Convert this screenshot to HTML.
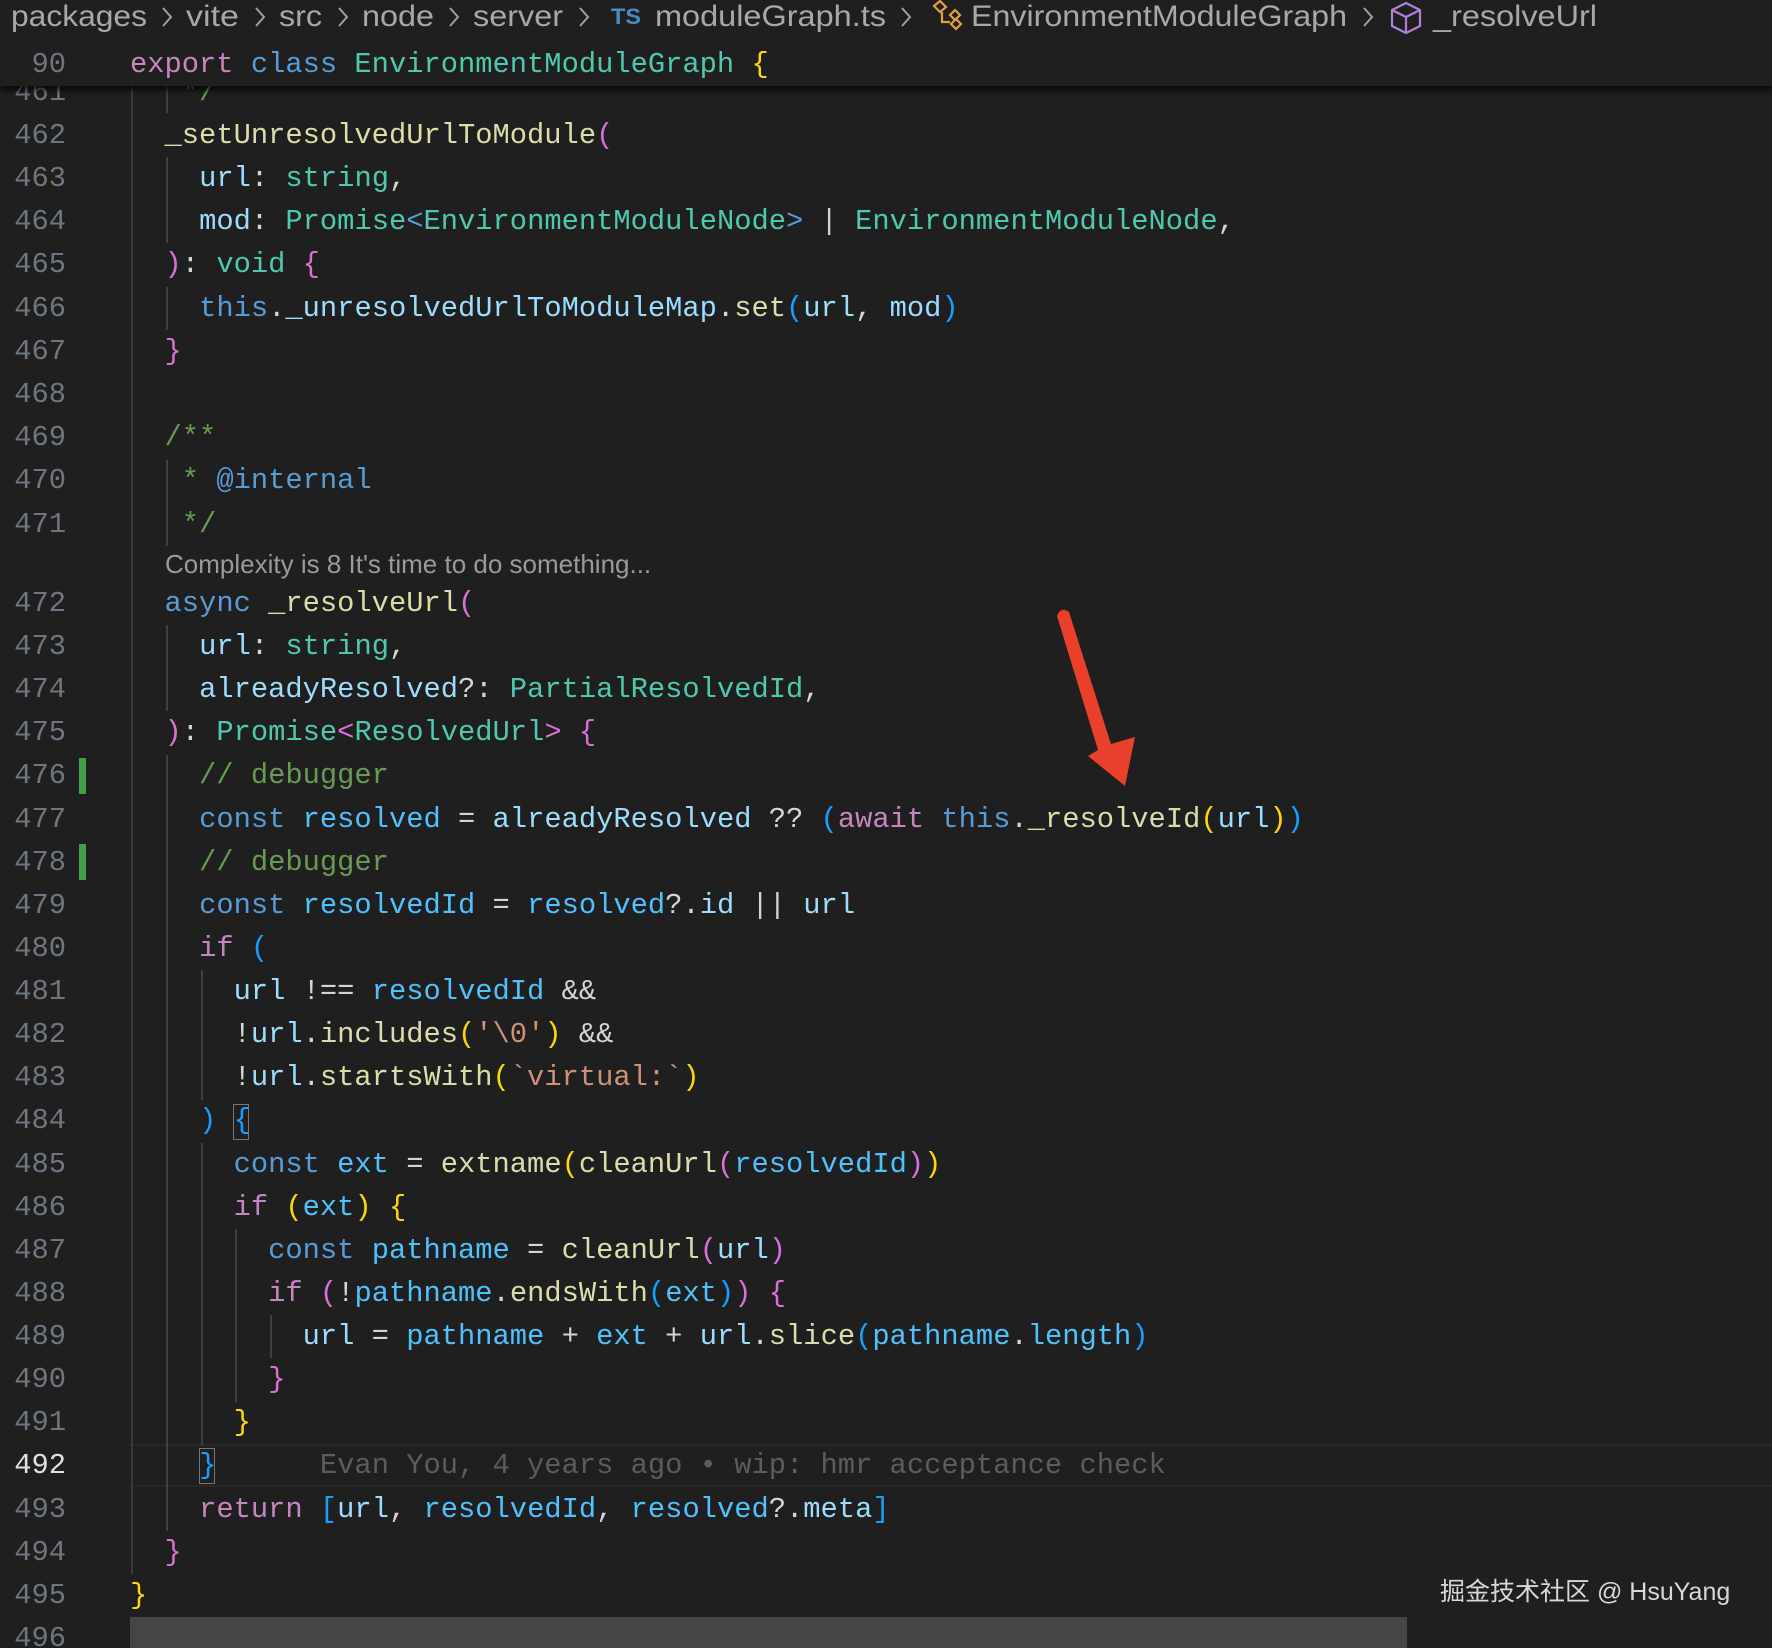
<!DOCTYPE html>
<html><head><meta charset="utf-8">
<style>
html,body{margin:0;padding:0;background:#1f1f1f;width:1772px;height:1648px;overflow:hidden;position:relative}
.mono{font-family:"Liberation Mono","DejaVu Sans Mono",monospace;font-size:28.77px}
.blk{position:absolute;left:130px}
.blk div{height:43.2px;line-height:43.2px;color:#d4d4d4;white-space:pre}
.b2 div{height:43.14px;line-height:43.14px}
.ln{position:absolute;left:0;width:66px;text-align:right;color:#6e7681}
.ln div{height:43.2px;line-height:43.2px}
.lnb div{height:43.14px;line-height:43.14px}
.k{color:#c586c0}.b{color:#569cd6}.t{color:#4ec9b0}.f{color:#dcdcaa}.v{color:#9cdcfe}.c{color:#4fc1ff}
.blk .cm,.cm{color:#6a9955}.s{color:#ce9178}.p1{color:#ffd700}.p2{color:#da70d6}.p3{color:#179fff}
.g{position:absolute;width:1.5px;background:#404040}
</style></head><body>

<div style="position:absolute;left:130px;right:0;top:1444px;height:43px;border-top:2px solid #282828;border-bottom:2px solid #282828;box-sizing:border-box"></div>

<div class="g" style="left:131px;top:86px;height:1488px;background:#3a3a3a"></div>
<div class="g" style="left:166px;top:86px;height:27px"></div>
<div class="g" style="left:166px;top:157px;height:86.4px"></div>
<div class="g" style="left:166px;top:286.7px;height:43.2px"></div>
<div class="g" style="left:166px;top:459.5px;height:86.4px"></div>
<div class="g" style="left:166px;top:625px;height:86.3px"></div>
<div class="g" style="left:166px;top:754.5px;height:776.5px"></div>
<div class="g" style="left:201px;top:970.2px;height:129.4px"></div>
<div class="g" style="left:201px;top:1142.7px;height:302px"></div>
<div class="g" style="left:235px;top:1229px;height:172.6px"></div>
<div class="g" style="left:270px;top:1315.3px;height:43.1px"></div>

<div style="position:absolute;left:79px;top:758px;width:7px;height:36px;background:#3fa14a"></div>
<div style="position:absolute;left:79px;top:844px;width:7px;height:36px;background:#3fa14a"></div>

<div style="position:absolute;left:233px;top:1104px;width:16px;height:36px;border:1.5px solid #777;box-sizing:border-box"></div>
<div style="position:absolute;left:199px;top:1448px;width:16px;height:36px;border:1.5px solid #777;box-sizing:border-box"></div>

<div class="ln mono" style="top:70.7px"><div>461</div><div>462</div><div>463</div><div>464</div><div>465</div><div>466</div><div>467</div><div>468</div><div>469</div><div>470</div><div>471</div></div>
<div class="ln lnb mono" style="top:581.9px"><div>472</div><div>473</div><div>474</div><div>475</div><div>476</div><div>477</div><div>478</div><div>479</div><div>480</div><div>481</div><div>482</div><div>483</div><div>484</div><div>485</div><div>486</div><div>487</div><div>488</div><div>489</div><div>490</div><div>491</div><div style="color:#e0e0e0">492</div><div>493</div><div>494</div><div>495</div><div>496</div></div>

<div class="blk mono" style="top:70.7px"><div class="cm">   */</div><div>  <span class="f">_setUnresolvedUrlToModule</span><span class="p2">(</span></div><div>    <span class="v">url</span>: <span class="t">string</span>,</div><div>    <span class="v">mod</span>: <span class="t">Promise</span><span class="b">&lt;</span><span class="t">EnvironmentModuleNode</span><span class="b">&gt;</span> | <span class="t">EnvironmentModuleNode</span>,</div><div>  <span class="p2">)</span>: <span class="t">void</span> <span class="p2">{</span></div><div>    <span class="b">this</span>.<span class="v">_unresolvedUrlToModuleMap</span>.<span class="f">set</span><span class="p3">(</span><span class="v">url</span>, <span class="v">mod</span><span class="p3">)</span></div><div>  <span class="p2">}</span></div><div> </div><div class="cm">  /**</div><div><span class="cm">   * </span><span class="b">@internal</span></div><div class="cm">   */</div></div>

<div style="position:absolute;left:165px;top:547px;font-family:'Liberation Sans',sans-serif;font-size:26px;color:#9a9a9a;line-height:34px;white-space:pre">Complexity is 8 It's time to do something...</div>

<div class="blk b2 mono" style="top:581.9px"><div>  <span class="b">async</span> <span class="f">_resolveUrl</span><span class="p2">(</span></div><div>    <span class="v">url</span>: <span class="t">string</span>,</div><div>    <span class="v">alreadyResolved</span>?: <span class="t">PartialResolvedId</span>,</div><div>  <span class="p2">)</span>: <span class="t">Promise</span><span class="p2">&lt;</span><span class="t">ResolvedUrl</span><span class="p2">&gt;</span> <span class="p2">{</span></div><div class="cm">    // debugger</div><div>    <span class="b">const</span> <span class="c">resolved</span> = <span class="v">alreadyResolved</span> ?? <span class="p3">(</span><span class="k">await</span> <span class="b">this</span>.<span class="f">_resolveId</span><span class="p1">(</span><span class="v">url</span><span class="p1">)</span><span class="p3">)</span></div><div class="cm">    // debugger</div><div>    <span class="b">const</span> <span class="c">resolvedId</span> = <span class="c">resolved</span>?.<span class="v">id</span> || <span class="v">url</span></div><div>    <span class="k">if</span> <span class="p3">(</span></div><div>      <span class="v">url</span> !== <span class="c">resolvedId</span> &amp;&amp;</div><div>      !<span class="v">url</span>.<span class="f">includes</span><span class="p1">(</span><span class="s">'\0'</span><span class="p1">)</span> &amp;&amp;</div><div>      !<span class="v">url</span>.<span class="f">startsWith</span><span class="p1">(</span><span class="s">`virtual:`</span><span class="p1">)</span></div><div>    <span class="p3">)</span> <span class="p3">{</span></div><div>      <span class="b">const</span> <span class="c">ext</span> = <span class="f">extname</span><span class="p1">(</span><span class="f">cleanUrl</span><span class="p2">(</span><span class="c">resolvedId</span><span class="p2">)</span><span class="p1">)</span></div><div>      <span class="k">if</span> <span class="p1">(</span><span class="c">ext</span><span class="p1">)</span> <span class="p1">{</span></div><div>        <span class="b">const</span> <span class="c">pathname</span> = <span class="f">cleanUrl</span><span class="p2">(</span><span class="v">url</span><span class="p2">)</span></div><div>        <span class="k">if</span> <span class="p2">(</span>!<span class="c">pathname</span>.<span class="f">endsWith</span><span class="p3">(</span><span class="c">ext</span><span class="p3">)</span><span class="p2">)</span> <span class="p2">{</span></div><div>          <span class="v">url</span> = <span class="c">pathname</span> + <span class="c">ext</span> + <span class="v">url</span>.<span class="f">slice</span><span class="p3">(</span><span class="c">pathname</span>.<span class="c">length</span><span class="p3">)</span></div><div>        <span class="p2">}</span></div><div>      <span class="p1">}</span></div><div>    <span class="p3">}</span><span style="color:#5c5c5c">      Evan You, 4 years ago • wip: hmr acceptance check</span></div><div>    <span class="k">return</span> <span class="p3">[</span><span class="v">url</span>, <span class="c">resolvedId</span>, <span class="c">resolved</span>?.<span class="v">meta</span><span class="p3">]</span></div><div>  <span class="p2">}</span></div><div><span class="p1">}</span></div><div> </div></div>

<div style="position:absolute;left:0;top:0;width:1772px;height:86px;background:#1f1f1f;box-shadow:0 4px 6px rgba(0,0,0,0.8)"></div>
<div class="mono" style="position:absolute;left:0;top:43px;width:66px;text-align:right;color:#6e7681;line-height:43px">90</div>
<div class="mono" style="position:absolute;left:130px;top:43px;line-height:43px;color:#d4d4d4;white-space:pre"><span class="k">export</span> <span class="b">class</span> <span class="t">EnvironmentModuleGraph</span> <span class="p1">{</span></div>

<svg style="position:absolute;left:0;top:0" width="1772" height="40">
<g font-family="Liberation Sans, sans-serif" font-size="30" fill="#a8a8a8">
<text x="11" y="26" textLength="136" lengthAdjust="spacingAndGlyphs">packages</text>
<text x="186" y="26" textLength="53" lengthAdjust="spacingAndGlyphs">vite</text>
<text x="279" y="26" textLength="43" lengthAdjust="spacingAndGlyphs">src</text>
<text x="362" y="26" textLength="72" lengthAdjust="spacingAndGlyphs">node</text>
<text x="473" y="26" textLength="90" lengthAdjust="spacingAndGlyphs">server</text>
<text x="655" y="26" textLength="231" lengthAdjust="spacingAndGlyphs">moduleGraph.ts</text>
<text x="971" y="26" textLength="376" lengthAdjust="spacingAndGlyphs">EnvironmentModuleGraph</text>
<text x="1433" y="26" textLength="164" lengthAdjust="spacingAndGlyphs">_resolveUrl</text>
<text x="611" y="24" font-size="22" fill="#4a8cc4" font-weight="bold" textLength="30" lengthAdjust="spacingAndGlyphs">TS</text>
</g>
<g fill="none" stroke="#a0a0a0" stroke-width="2">
<path d="M163 8 L171 17 L163 26"/><path d="M256 8 L264 17 L256 26"/><path d="M339 8 L347 17 L339 26"/>
<path d="M450 8 L458 17 L450 26"/><path d="M580 8 L588 17 L580 26"/><path d="M902 8 L910 17 L902 26"/><path d="M1364 8 L1372 17 L1364 26"/>
</g>
<g fill="none" stroke="#e0a040" stroke-width="2.2">
<path d="M934 6 L940 1 L946 7 L940 12 Z"/><path d="M942 12 L942 22 L950 22"/><path d="M950 15 L955 10 L960 15 L955 20 Z"/><path d="M951 24 L956 19 L961 24 L956 29 Z"/>
</g>
<g fill="none" stroke="#b180d7" stroke-width="2.2" stroke-linejoin="round">
<path d="M1406 3 L1420 10 L1420 26 L1406 33 L1392 26 L1392 10 Z"/><path d="M1392 10 L1406 17 L1420 10 M1406 17 L1406 33"/>
</g>
</svg>

<svg style="position:absolute;left:0;top:0" width="1772" height="1648">
<path d="M1057 616 Q1061 606 1069 612 L1111 744 L1135 737 L1125 786 L1088 756 L1098 750 Z" fill="#e8402a"/>
</svg>

<div style="position:absolute;left:130px;top:1617px;width:1277px;height:31px;background:#454545"></div>

<div style="position:absolute;left:1440px;top:1574px;font-family:'Liberation Sans','Noto Sans CJK SC',sans-serif;font-size:25px;color:#d8d8d8;line-height:36px;white-space:pre">掘金技术社区 @ HsuYang</div>
</body></html>
